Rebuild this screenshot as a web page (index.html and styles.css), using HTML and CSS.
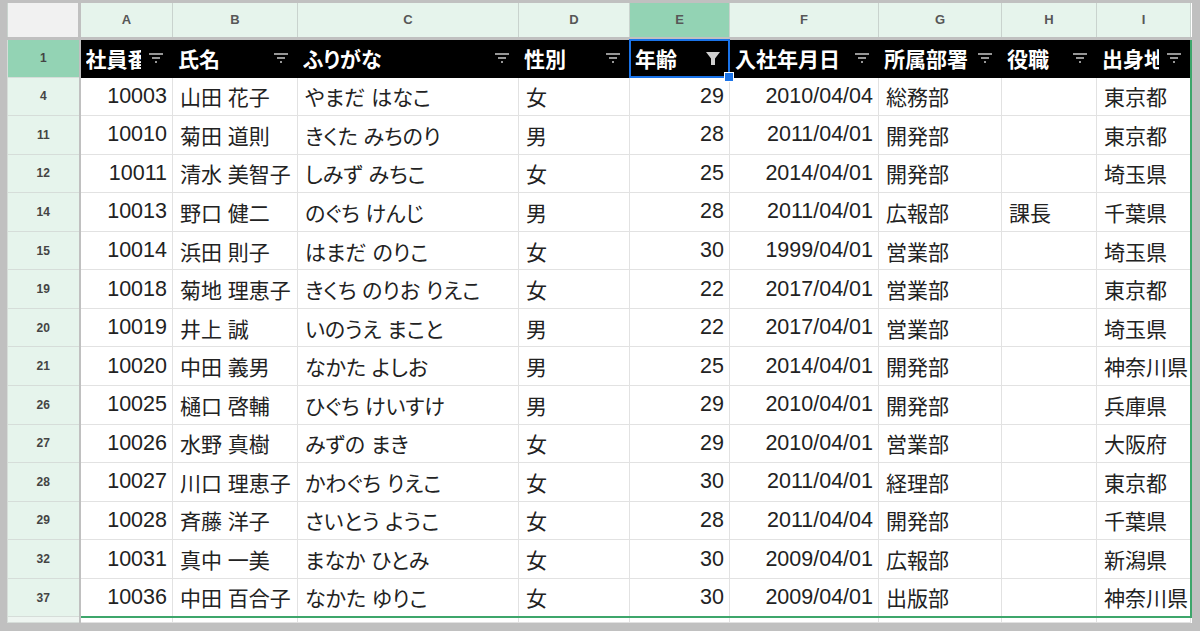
FILE: index.html
```html
<!DOCTYPE html>
<html lang="ja">

<head>
    <meta charset="UTF-8">
    <meta name="viewport" content="width=device-width, initial-scale=1.0">
    <title>社員名簿 - フィルタ</title>
    <link rel="stylesheet" href="styles.css">
</head>

<body>
    <div class="frame">
        <table class="sheet">
            <colgroup>
                <col class="c-row">
                <col class="c-a">
                <col class="c-b">
                <col class="c-c">
                <col class="c-d">
                <col class="c-e">
                <col class="c-f">
                <col class="c-g">
                <col class="c-h">
                <col class="c-i">
            </colgroup>
            <thead>
                <tr class="letters">
                    <th class="corner"></th>
                    <th>A</th>
                    <th>B</th>
                    <th>C</th>
                    <th>D</th>
                    <th class="sel">E</th>
                    <th>F</th>
                    <th>G</th>
                    <th>H</th>
                    <th>I</th>
                </tr>
            </thead>
            <tbody>
                <tr class="head">
                    <th class="rn sel">1</th>
                    <td><div class="hd"><span>社員番号</span><svg viewBox="0 0 14 10"><path d="M0 1h14M3 5h8M6 9h2"/></svg></div></td>
                    <td><div class="hd"><span>氏名</span><svg viewBox="0 0 14 10"><path d="M0 1h14M3 5h8M6 9h2"/></svg></div></td>
                    <td><div class="hd"><span>ふりがな</span><svg viewBox="0 0 14 10"><path d="M0 1h14M3 5h8M6 9h2"/></svg></div></td>
                    <td><div class="hd"><span>性別</span><svg viewBox="0 0 14 10"><path d="M0 1h14M3 5h8M6 9h2"/></svg></div></td>
                    <td class="active"><div class="hd"><span>年齢</span><svg class="funnel" viewBox="0 0 14 13"><path d="M0 0h14l-5 6.5V13H5V6.5z"/></svg></div></td>
                    <td><div class="hd"><span>入社年月日</span><svg viewBox="0 0 14 10"><path d="M0 1h14M3 5h8M6 9h2"/></svg></div></td>
                    <td><div class="hd"><span>所属部署</span><svg viewBox="0 0 14 10"><path d="M0 1h14M3 5h8M6 9h2"/></svg></div></td>
                    <td><div class="hd"><span>役職</span><svg viewBox="0 0 14 10"><path d="M0 1h14M3 5h8M6 9h2"/></svg></div></td>
                    <td class="edge"><div class="hd"><span>出身地</span><svg viewBox="0 0 14 10"><path d="M0 1h14M3 5h8M6 9h2"/></svg></div></td>
                </tr>
                <tr>
                    <th class="rn">4</th>
                    <td class="num">10003</td><td>山田 花子</td><td>やまだ はなこ</td><td>女</td><td class="num">29</td><td class="num">2010/04/04</td><td>総務部</td><td></td><td class="edge">東京都</td>
                </tr>
                <tr>
                    <th class="rn">11</th>
                    <td class="num">10010</td><td>菊田 道則</td><td>きくた みちのり</td><td>男</td><td class="num">28</td><td class="num">2011/04/01</td><td>開発部</td><td></td><td class="edge">東京都</td>
                </tr>
                <tr>
                    <th class="rn">12</th>
                    <td class="num">10011</td><td>清水 美智子</td><td>しみず みちこ</td><td>女</td><td class="num">25</td><td class="num">2014/04/01</td><td>開発部</td><td></td><td class="edge">埼玉県</td>
                </tr>
                <tr>
                    <th class="rn">14</th>
                    <td class="num">10013</td><td>野口 健二</td><td>のぐち けんじ</td><td>男</td><td class="num">28</td><td class="num">2011/04/01</td><td>広報部</td><td>課長</td><td class="edge">千葉県</td>
                </tr>
                <tr>
                    <th class="rn">15</th>
                    <td class="num">10014</td><td>浜田 則子</td><td>はまだ のりこ</td><td>女</td><td class="num">30</td><td class="num">1999/04/01</td><td>営業部</td><td></td><td class="edge">埼玉県</td>
                </tr>
                <tr>
                    <th class="rn">19</th>
                    <td class="num">10018</td><td>菊地 理恵子</td><td>きくち のりお りえこ</td><td>女</td><td class="num">22</td><td class="num">2017/04/01</td><td>営業部</td><td></td><td class="edge">東京都</td>
                </tr>
                <tr>
                    <th class="rn">20</th>
                    <td class="num">10019</td><td>井上 誠</td><td>いのうえ まこと</td><td>男</td><td class="num">22</td><td class="num">2017/04/01</td><td>営業部</td><td></td><td class="edge">埼玉県</td>
                </tr>
                <tr>
                    <th class="rn">21</th>
                    <td class="num">10020</td><td>中田 義男</td><td>なかた よしお</td><td>男</td><td class="num">25</td><td class="num">2014/04/01</td><td>開発部</td><td></td><td class="edge">神奈川県</td>
                </tr>
                <tr>
                    <th class="rn">26</th>
                    <td class="num">10025</td><td>樋口 啓輔</td><td>ひぐち けいすけ</td><td>男</td><td class="num">29</td><td class="num">2010/04/01</td><td>開発部</td><td></td><td class="edge">兵庫県</td>
                </tr>
                <tr>
                    <th class="rn">27</th>
                    <td class="num">10026</td><td>水野 真樹</td><td>みずの まき</td><td>女</td><td class="num">29</td><td class="num">2010/04/01</td><td>営業部</td><td></td><td class="edge">大阪府</td>
                </tr>
                <tr>
                    <th class="rn">28</th>
                    <td class="num">10027</td><td>川口 理恵子</td><td>かわぐち りえこ</td><td>女</td><td class="num">30</td><td class="num">2011/04/01</td><td>経理部</td><td></td><td class="edge">東京都</td>
                </tr>
                <tr>
                    <th class="rn">29</th>
                    <td class="num">10028</td><td>斉藤 洋子</td><td>さいとう ようこ</td><td>女</td><td class="num">28</td><td class="num">2011/04/04</td><td>開発部</td><td></td><td class="edge">千葉県</td>
                </tr>
                <tr>
                    <th class="rn">32</th>
                    <td class="num">10031</td><td>真中 一美</td><td>まなか ひとみ</td><td>女</td><td class="num">30</td><td class="num">2009/04/01</td><td>広報部</td><td></td><td class="edge">新潟県</td>
                </tr>
                <tr class="last">
                    <th class="rn">37</th>
                    <td class="num">10036</td><td>中田 百合子</td><td>なかた ゆりこ</td><td>女</td><td class="num">30</td><td class="num">2009/04/01</td><td>出版部</td><td></td><td class="edge">神奈川県</td>
                </tr>
                <tr class="stub">
                    <th class="rn"></th>
                    <td></td><td></td><td></td><td></td><td></td><td></td><td></td><td></td><td></td>
                </tr>
            </tbody>
        </table>
    </div>
</body>

</html>
```

FILE: styles.css
```css
* {
    margin: 0;
    padding: 0;
    box-sizing: border-box;
}

body {
    background-color: #c0c0c0;
}

.frame {
    width: 1200px;
    height: 631px;
    padding: 3px 10px 0 7px;
    overflow: hidden;
}

.sheet {
    width: 1183px;
    table-layout: fixed;
    border-collapse: collapse;
    background-color: #fff;
    font-family: "Liberation Sans", "Noto Sans CJK JP", sans-serif;
    font-size: 21px;
    color: #222;
}

.c-row { width: 72px; }
.c-a { width: 93px; }
.c-b { width: 125px; }
.c-c { width: 221px; }
.c-d { width: 111px; }
.c-e { width: 100px; }
.c-f { width: 149px; }
.c-g { width: 123px; }
.c-h { width: 95px; }
.c-i { width: 94px; }

.sheet td {
    height: 38.57px;
    padding: 0 5px 0 7px;
    border: 1px solid #e2e2e2;
    white-space: nowrap;
    overflow: hidden;
    font-feature-settings: "palt";
    vertical-align: middle;
}

.sheet td.num {
    text-align: right;
    padding: 0 5px;
    font-size: 21.5px;
}

/* 列見出し */
.letters th {
    height: 35px;
    background-color: #e6f4ec;
    border: 1px solid #c9d3ce;
    border-bottom: 3px solid #c0c0c0;
    border-top: none;
    font-size: 13px;
    font-weight: bold;
    color: #575757;
}

.letters th.corner {
    background-color: #f1f1f1;
    border-right: 3px solid #c0c0c0;
}

.letters th.sel {
    background-color: #93d3b4;
}

/* 行番号 */
.rn {
    background-color: #e6f4ec;
    border: 1px solid #d6ddd9;
    border-right: 2px solid #c0c0c0;
    font-size: 12px;
    font-weight: bold;
    color: #444;
}

.rn.sel {
    background-color: #93d3b4;
}

/* 見出し行 */
.head td {
    height: 39px;
    background-color: #000;
    border-color: #000;
    color: #fff;
    font-weight: bold;
    padding: 0 9px 0 5px;
}

.hd {
    display: flex;
    align-items: center;
}

.hd span {
    flex: 1;
    min-width: 0;
    overflow: hidden;
    margin-right: 8px;
}

.hd svg {
    width: 14px;
    height: 10px;
    fill: none;
    stroke: #c8c8c8;
    stroke-width: 1.6;
    flex-shrink: 0;
}

.hd svg.funnel {
    height: 13px;
    fill: #cfcfcf;
    stroke: none;
}

.head td.active {
    position: relative;
    overflow: visible;
}

.head td.active::before {
    content: "";
    position: absolute;
    top: -1px;
    left: -1px;
    right: -1px;
    bottom: -1px;
    border: 2px solid #1a73e8;
}

.head td.active::after {
    content: "";
    position: absolute;
    right: -5px;
    bottom: -5px;
    width: 8px;
    height: 8px;
    background-color: #1a73e8;
    border: 1px solid #fff;
    z-index: 2;
}

/* フィルタ範囲 */
.sheet td.edge {
    border-right: 2px solid #3da66b;
}

.head td.edge {
    border-right-color: #3da66b;
}

.last td {
    border-bottom: 2px solid #3da66b;
}

.stub td,
.stub .rn {
    height: 6px;
}

.stub .rn {
    background-color: #eef5f1;
}
```
